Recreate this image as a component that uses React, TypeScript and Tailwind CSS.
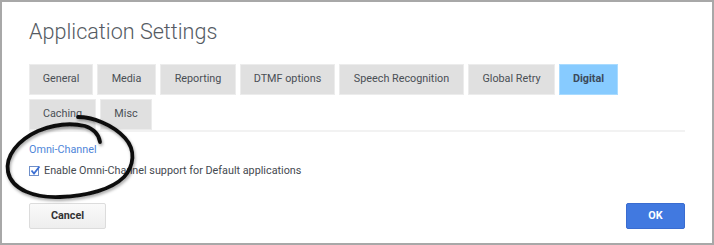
import React from "react";

const tabs: [string, number][] = [
  ["General", 64],
  ["Media", 59],
  ["Reporting", 76],
  ["DTMF options", 95],
  ["Speech Recognition", 125],
  ["Global Retry", 87],
  ["Digital", 59],
  ["Caching", 67],
  ["Misc", 52],
];

export default function App() {
  return (
    <div className="relative w-[714px] h-[245px] bg-white" style={{ fontFamily: "Roboto, 'Liberation Sans', sans-serif" }}>
      <div className="w-[714px] h-[245px] border-2 border-[#a8a8a8] bg-white pl-[27px] pr-[27px] pt-[16px]">
        <h1 className="text-[21.6px] leading-[28px] font-light text-[#555b63]">Application Settings</h1>
        <div className="mt-[18px] w-[656px] border-b-2 border-[#f2f2f2]">
          <div className="flex flex-wrap gap-x-[4px] gap-y-[4px]">
            {tabs.map(([t, w]) => (
              <div
                key={t}
                style={{ width: w }}
                className={
                  t === "Digital"
                    ? "h-[31px] flex items-center justify-center bg-[#87cbff] border border-[#a9dbff] text-[10.8px] font-bold text-[#3c4a5a]"
                    : "h-[31px] flex items-center justify-center bg-[#e0e0e0] border border-[#ececec] text-[10.8px] text-[#4a4f55]"
                }
              >
                {t}
              </div>
            ))}
          </div>
        </div>
        <div className="mt-[10px] text-[10.8px] leading-[16px] text-[#4f86d9]">Omni-Channel</div>
        <div className="mt-[5px] flex items-center gap-[5px] text-[10.8px] leading-[16px] text-[#44494f]">
          <span className="w-[10px] h-[10px] border border-[#6f8fc9] bg-white relative flex items-center justify-center">
            <svg width="11" height="11" viewBox="0 0 11 11" className="absolute -top-[2px] left-[0px]">
              <path d="M1.5 5.5 L4 8.5 L9.5 1.5" fill="none" stroke="#3b6fd4" strokeWidth="1.8" />
            </svg>
          </span>
          <span>Enable Omni-Channel support for Default applications</span>
        </div>
        <div className="mt-[24px] w-[656px] flex justify-between">
          <button className="w-[77px] h-[26px] rounded-[2px] border border-[#dcdcdc] bg-gradient-to-b from-[#fafafa] to-[#eeeeee] text-[10.8px] font-bold text-[#333]">
            Cancel
          </button>
          <button className="w-[59px] h-[26px] rounded-[2px] border border-[#3a6cd0] bg-[#4179e0] text-[10.8px] font-bold text-white">
            OK
          </button>
        </div>
      </div>
      <svg className="absolute left-0 top-0 pointer-events-none" width="714" height="245" viewBox="0 0 714 245">
        <defs>
          <filter id="sh" x="-20%" y="-20%" width="140%" height="140%">
            <feDropShadow dx="1" dy="2" stdDeviation="1.5" floodColor="#000" floodOpacity="0.35" />
          </filter>
        </defs>
        <path
          d="M78 117 C 92 117, 112 124, 125 138 C 136 150, 134 166, 124 177 C 112 189, 88 196, 60 197 C 35 198, 12 190, 8 172 C 5 156, 18 140, 38 131 C 55 124, 72 123, 85 126 C 94 129, 99 135, 100 142"
          fill="none"
          stroke="#111"
          strokeWidth="3.8"
          strokeLinecap="round"
          filter="url(#sh)"
        />
      </svg>
    </div>
  );
}
